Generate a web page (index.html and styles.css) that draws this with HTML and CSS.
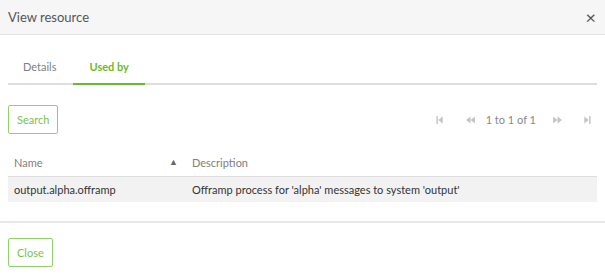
FILE: index.html
```html
<!DOCTYPE html>
<html lang="en">
<head>
  <meta charset="UTF-8">
  <title>View resource</title>
  <link rel="stylesheet" href="styles.css">
</head>
<body>

  <div class="modal-header">
    <span class="modal-titulo">View resource</span>
    <span class="fechar">×</span>
  </div>

  <div class="modal-corpo">
    <ul class="abas">
      <li class="aba">Details</li>
      <li class="aba ativa">Used by</li>
    </ul>

    <div class="barra">
      <button class="botao">Search</button>
      <div class="paginacao">
        <svg class="icone icone-primeiro" viewBox="0 0 8 9"><rect x="0" y="0" width="1.6" height="9"/><path d="M7 0.5 L2 4.5 L7 8.5 Z"/></svg>
        <svg class="icone icone-anterior" viewBox="0 0 10 9"><path d="M5 0.5 L0 4.5 L5 8.5 Z"/><path d="M10 0.5 L5 4.5 L10 8.5 Z"/></svg>
        <span class="contagem">1 to 1 of 1</span>
        <svg class="icone icone-proximo" viewBox="0 0 10 9"><path d="M0 0.5 L5 4.5 L0 8.5 Z"/><path d="M5 0.5 L10 4.5 L5 8.5 Z"/></svg>
        <svg class="icone icone-ultimo" viewBox="0 0 8 9"><path d="M1 0.5 L6 4.5 L1 8.5 Z"/><rect x="6.4" y="0" width="1.6" height="9"/></svg>
      </div>
    </div>

    <table class="tabela">
      <tr>
        <th class="col-nome">Name <span class="seta">▲</span></th>
        <th>Description</th>
      </tr>
      <tr class="linha">
        <td>output.alpha.offramp</td>
        <td>Offramp process for 'alpha' messages to system 'output'</td>
      </tr>
    </table>
  </div>

  <div class="modal-rodape">
    <button class="botao">Close</button>
  </div>

</body>
</html>
```

FILE: styles.css
```css
:root {
  --verde: #6cb92f;
  --verde-borda: #93d06b;
  --cinza-fundo: #f6f6f6;
  --cinza-linha: #e2e2e2;
  --texto: #444444;
  --texto-claro: #808080;
}

body {
  margin: 0;
  font-family: 'Lato', 'Open Sans', sans-serif;
  font-size: 11px;
  color: var(--texto);
  background-color: #ffffff;
}

.modal-header {
  height: 34px;
  background-color: var(--cinza-fundo);
  border-bottom: 1px solid var(--cinza-linha);
  display: flex;
  align-items: center;
  justify-content: space-between;
  padding: 0 8px;
}

.modal-titulo {
  font-size: 13px;
  color: #555555;
}

.fechar {
  font-size: 18px;
  color: #555555;
  margin-right: 1px;
}

.modal-corpo {
  padding: 0 8px 19px;
}

.abas {
  list-style: none;
  margin: 16px 0 0;
  padding: 0;
  display: flex;
  border-bottom: 2px solid #dddddd;
}

.aba {
  height: 32px;
  line-height: 32px;
  padding: 0 17px 0 15px;
  color: var(--texto-claro);
  font-size: 11px;
}

.aba.ativa {
  color: var(--verde);
  font-weight: bold;
  padding: 0 16px;
  border-bottom: 2px solid var(--verde);
  margin-bottom: -2px;
}

.barra {
  margin-top: 20px;
  display: flex;
  justify-content: space-between;
  align-items: center;
}

.botao {
  height: 29px;
  padding: 0 8px;
  background-color: #ffffff;
  border: 1px solid var(--verde-borda);
  border-radius: 2px;
  color: #7cc24a;
  font-family: inherit;
  font-size: 11px;
  cursor: pointer;
}

.paginacao {
  display: flex;
  align-items: center;
  color: #888888;
  margin-right: 6px;
}

.icone {
  width: 8px;
  height: 8px;
  fill: #c4c4c4;
}

.icone-anterior,
.icone-proximo {
  width: 9px;
}

.icone-primeiro {
  margin-right: 22px;
}

.icone-anterior {
  margin-right: 11px;
}

.contagem {
  margin-right: 17px;
}

.icone-proximo {
  margin-right: 21px;
}

.tabela {
  width: 100%;
  margin-top: 14px;
  border-collapse: collapse;
}

.tabela th {
  height: 28px;
  text-align: left;
  font-weight: normal;
  color: var(--texto-claro);
  padding: 0 6px;
}

.col-nome {
  width: 166px;
}

.seta {
  float: right;
  font-size: 9px;
  color: #666666;
  margin-right: 2px;
}

.tabela td {
  height: 25px;
  padding: 0 6px;
  background-color: #f2f2f2;
  border-top: 1px solid #dddddd;
  color: #333333;
}

.modal-rodape {
  border-top: 2px solid #e8e8e8;
  padding: 15px 8px;
}
```
